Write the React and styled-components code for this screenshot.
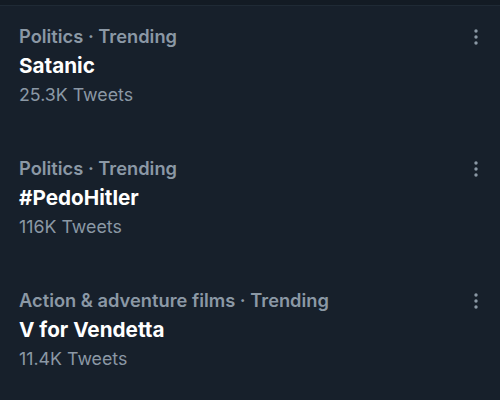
import React from "react";
import styled, { createGlobalStyle } from "styled-components";

const Global = createGlobalStyle`
  html, body { margin: 0; padding: 0; background: #17202b; }
  body { font-family: Inter, "Noto Sans", sans-serif; -webkit-font-smoothing: antialiased; }
`;

const Page = styled.div`
  width: 500px;
  height: 400px;
  background: #17202b;
  overflow: hidden;
`;

const TopStrip = styled.div`
  height: 5px;
  background: #131b24;
  border-bottom: 1px solid #1f2a35;
`;

const List = styled.div`
  display: flex;
  flex-direction: column;
`;

const Item = styled.div`
  display: flex;
  justify-content: space-between;
  align-items: flex-start;
  padding: 16px 16px 29px 19px;
`;

const Texts = styled.div`
  display: flex;
  flex-direction: column;
`;

const Category = styled.div`
  color: #8b98a5;
  font-size: 18.3px;
  font-weight: 600;
  line-height: 29px;
`;

const Title = styled.div`
  color: #ffffff;
  font-size: 20.7px;
  font-weight: 700;
  line-height: 29px;
`;

const Count = styled.div`
  color: #8b98a5;
  font-size: 17.8px;
  font-weight: 400;
  line-height: 29px;
`;

const More = styled.div`
  width: 16px;
  display: flex;
  justify-content: center;
  padding-top: 6px;
`;

const Dots = () => (
  <svg width="6" height="18" viewBox="0 0 6 18">
    <circle cx="3" cy="3" r="1.7" fill="#8b98a5" />
    <circle cx="3" cy="9" r="1.7" fill="#8b98a5" />
    <circle cx="3" cy="15" r="1.7" fill="#8b98a5" />
  </svg>
);

const trends = [
  { cat: "Politics · Trending", title: "Satanic", count: "25.3K Tweets" },
  { cat: "Politics · Trending", title: "#PedoHitler", count: "116K Tweets" },
  { cat: "Action & adventure films · Trending", title: "V for Vendetta", count: "11.4K Tweets" },
];

export default function App() {
  return (
    <Page>
      <Global />
      <TopStrip />
      <List>
        {trends.map((t) => (
          <Item key={t.title}>
            <Texts>
              <Category>{t.cat}</Category>
              <Title>{t.title}</Title>
              <Count>{t.count}</Count>
            </Texts>
            <More>
              <Dots />
            </More>
          </Item>
        ))}
      </List>
    </Page>
  );
}
